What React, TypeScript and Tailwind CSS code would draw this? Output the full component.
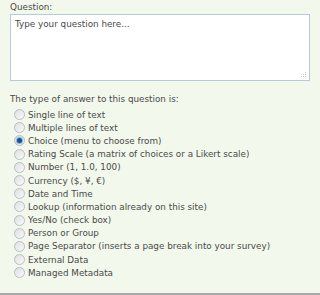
import React from 'react';

const options = [
  'Single line of text',
  'Multiple lines of text',
  'Choice (menu to choose from)',
  'Rating Scale (a matrix of choices or a Likert scale)',
  'Number (1, 1.0, 100)',
  'Currency ($, ¥, €)',
  'Date and Time',
  'Lookup (information already on this site)',
  'Yes/No (check box)',
  'Person or Group',
  'Page Separator (inserts a page break into your survey)',
  'External Data',
  'Managed Metadata',
];

const Radio: React.FC<{ checked?: boolean }> = ({ checked }) => (
  <span className="relative flex h-[11px] w-[11px] shrink-0 items-center justify-center rounded-full border border-[#b8bfc4] bg-gradient-to-br from-[#dcdfe1] to-[#fafafa]">
    {checked && <span className="h-[5px] w-[5px] rounded-full bg-[#1c4f93] shadow-[0_0_1px_1px_#7eaedd]" />}
  </span>
);

const App: React.FC = () => {
  return (
    <div className="h-[295px] w-[320px] border-b-2 border-[#a8a8a8] bg-[#f2f8ec] px-[10px] pt-[1px] font-['DejaVu_Sans',Verdana,sans-serif] text-[8.8px] text-[#4a4a4a]">
      <div className="leading-[12px]">Question:</div>
      <div className="relative mt-[1px] h-[67px] w-[300px] border border-[#b9cad7] bg-white px-[4px] pt-[3px] leading-[12px]">
        Type your question here...
        <svg className="absolute bottom-[2px] right-[2px]" width="6" height="6" viewBox="0 0 6 6">
          <rect x="4" y="0" width="1" height="1" fill="#c8c8c8" />
          <rect x="2" y="2" width="1" height="1" fill="#c8c8c8" />
          <rect x="4" y="2" width="1" height="1" fill="#c8c8c8" />
          <rect x="0" y="4" width="1" height="1" fill="#c8c8c8" />
          <rect x="2" y="4" width="1" height="1" fill="#c8c8c8" />
          <rect x="4" y="4" width="1" height="1" fill="#c8c8c8" />
        </svg>
      </div>
      <div className="mt-[12px] leading-[12px]">The type of answer to this question is:</div>
      <ul className="mt-[3px] flex flex-col pl-[4px]">
        {options.map((o, i) => (
          <li key={o} className="flex h-[13.2px] items-center gap-[3px] whitespace-nowrap leading-[12px]">
            <Radio checked={i === 2} />
            <span>{o}</span>
          </li>
        ))}
      </ul>
    </div>
  );
};

export default App;
